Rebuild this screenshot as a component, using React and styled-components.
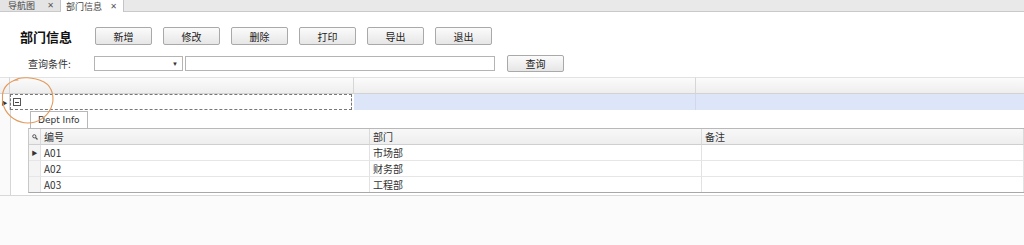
import React from "react";
import styled, { createGlobalStyle } from "styled-components";

const Global = createGlobalStyle`
  html, body { margin: 0; padding: 0; background: #fbfbfb; }
  body {
    width: 1024px;
    height: 245px;
    overflow: hidden;
    font-family: "Liberation Sans", "Noto Sans CJK SC", sans-serif;
    font-size: 10px;
    color: #222;
  }
`;

const Page = styled.div`
  position: relative;
  width: 1024px;
  height: 245px;
  background: #fbfbfb;
`;

const TabStrip = styled.div`
  display: flex;
  height: 11px;
  background: #e9e9e9;
  border-bottom: 1px solid #c9c9c9;
`;

const Tab = styled.div`
  display: flex;
  align-items: center;
  justify-content: space-between;
  box-sizing: border-box;
  width: ${(p) => p.$w}px;
  height: ${(p) => (p.$active ? 12 : 11)}px;
  padding: 0 6px 0 ${(p) => (p.$active ? 5 : 8)}px;
  background: ${(p) => (p.$active ? "#fff" : "#e4e4e4")};
  border-right: 1px solid #c4c4c4;
  font-family: "Noto Sans CJK SC", sans-serif;
  font-size: 9px;
  line-height: 11px;
  color: #444;
`;

const Close = styled.span`
  font-family: "DejaVu Sans", sans-serif;
  font-size: 8px;
  color: #555;
`;

const Body = styled.div`
  background: #fff;
`;

const Toolbar = styled.div`
  display: flex;
  align-items: center;
  height: 18px;
  padding: 15px 0 0 20px;
`;

const Title = styled.div`
  width: 75px;
  font-size: 13px;
  font-weight: bold;
  font-family: "Noto Sans CJK SC", sans-serif;
  color: #111;
`;

const Buttons = styled.div`
  display: flex;
  gap: 11px;
`;

const Button = styled.button`
  box-sizing: border-box;
  width: 57px;
  height: 18px;
  padding: 0;
  border: 1px solid #a9a9a9;
  border-radius: 2px;
  background: linear-gradient(#fbfbfb, #e6e6e6);
  font-family: "Noto Sans CJK SC", sans-serif;
  font-size: 10px;
  color: #222;
`;

const QueryRow = styled.div`
  display: flex;
  align-items: center;
  height: 17px;
  padding: 10px 0 5px 28px;
`;

const Label = styled.div`
  width: 66px;
  font-family: "Noto Sans CJK SC", sans-serif;
  font-size: 10px;
  color: #333;
`;

const Combo = styled.div`
  box-sizing: border-box;
  display: flex;
  justify-content: flex-end;
  align-items: center;
  width: 89px;
  height: 15px;
  padding-right: 4px;
  border: 1px solid #b4b4b4;
  background: #fff;
  font-size: 6px;
  color: #333;
`;

const Input = styled.div`
  box-sizing: border-box;
  width: 310px;
  height: 15px;
  margin-left: 2px;
  border: 1px solid #b4b4b4;
  background: #fff;
`;

const SearchButton = styled(Button)`
  margin-left: 12px;
  height: 17px;
`;

const Grid = styled.div`
  display: grid;
  grid-template-columns: 10px 344px 342px 1fr;
`;

const HeadCell = styled.div`
  height: 15px;
  background: linear-gradient(#fbfbfb, #eeeeee);
  border-bottom: 1px solid #d2d2d2;
  border-right: ${(p) => (p.$last ? "none" : "1px solid #d6d6d6")};
  border-top: 1px solid #e2e2e2;
`;

const Indicator = styled.div`
  display: flex;
  align-items: center;
  justify-content: center;
  height: 16px;
  border-right: 1px solid #d6d6d6;
  font-size: 6px;
  color: #333;
`;

const FocusCell = styled.div`
  box-sizing: border-box;
  display: flex;
  align-items: center;
  height: 16px;
  margin-right: 2px;
  padding-left: 2px;
  border: 1px dashed #777;
  background: #fff;
`;

const SelCell = styled.div`
  height: 16px;
  background: #dde6f9;
  border-right: ${(p) => (p.$last ? "none" : "1px solid #d0d8ea")};
`;

const Expander = styled.div`
  box-sizing: border-box;
  width: 8px;
  height: 8px;
  border: 1px solid #555;
  display: flex;
  align-items: center;
  justify-content: center;
  &::after {
    content: "";
    width: 4px;
    height: 1px;
    background: #444;
  }
`;

const DetailArea = styled.div`
  display: flex;
  background: #fff;
`;

const Gutter = styled.div`
  width: 10px;
  border-right: 1px solid #d6d6d6;
  background: #fafafa;
`;

const Detail = styled.div`
  flex: 1;
  padding: 1px 0 2px 17px;
`;

const DetailTabs = styled.div`
  display: flex;
  padding-left: 2px;
`;

const DetailTab = styled.div`
  box-sizing: border-box;
  height: 17px;
  padding: 0 7px;
  border: 1px solid #b8b8b8;
  border-bottom: none;
  background: #fff;
  font-family: "DejaVu Sans", sans-serif;
  font-size: 9px;
  line-height: 17px;
  color: #333;
`;

const SubGrid = styled.div`
  display: grid;
  grid-template-columns: 12px 329px 332px 1fr;
  border-top: 1px solid #b8b8b8;
  border-bottom: 1px solid #a8a8a8;
  border-left: 1px solid #c8c8c8;
`;

const SubHead = styled.div`
  display: flex;
  align-items: center;
  justify-content: ${(p) => (p.$center ? "center" : "flex-start")};
  height: 15px;
  padding-left: ${(p) => (p.$center ? 0 : 3)}px;
  background: linear-gradient(#f8f8f8, #eeeeee);
  border-bottom: 1px solid #cfcfcf;
  border-right: 1px solid #dadada;
  font-family: "Noto Sans CJK SC", sans-serif;
  font-size: 10px;
  color: #333;
`;

const SubCell = styled.div`
  display: flex;
  align-items: center;
  justify-content: ${(p) => (p.$center ? "center" : "flex-start")};
  height: 15px;
  padding-left: ${(p) => (p.$center ? 0 : 3)}px;
  background: ${(p) => (p.$gutter ? "#f4f4f4" : "#fff")};
  border-bottom: ${(p) => (p.$lastRow ? "none" : "1px solid #e6e6e6")};
  border-right: 1px solid #e2e2e2;
  font-family: "Noto Sans CJK SC", sans-serif;
  font-size: 10px;
  color: #333;
`;

const RowMark = styled.span`
  font-size: 6px;
`;

const Bottom = styled.div`
  height: 52px;
  border-top: 1px solid #d8d8d8;
  background: #fbfbfb;
`;

const Annotation = styled.svg`
  position: absolute;
  left: 0;
  top: 74px;
  pointer-events: none;
`;

const Magnifier = () => (
  <svg width="6" height="6" viewBox="0 0 6 6">
    <circle cx="2.3" cy="2.3" r="1.6" fill="none" stroke="#555" strokeWidth="1" />
    <line x1="3.5" y1="3.5" x2="5.5" y2="5.5" stroke="#555" strokeWidth="1.2" />
  </svg>
);

const rows = [
  { code: "A01", dept: "市场部" },
  { code: "A02", dept: "财务部" },
  { code: "A03", dept: "工程部" },
];

const actions = ["新增", "修改", "删除", "打印", "导出", "退出"];

export default function App() {
  return (
    <Page>
      <Global />
      <TabStrip>
        <Tab $w={61}>
          <span>导航图</span>
          <Close>✕</Close>
        </Tab>
        <Tab $w={63} $active>
          <span>部门信息</span>
          <Close>✕</Close>
        </Tab>
      </TabStrip>
      <Body>
        <Toolbar>
          <Title>部门信息</Title>
          <Buttons>
            {actions.map((a) => (
              <Button key={a}>{a}</Button>
            ))}
          </Buttons>
        </Toolbar>
        <QueryRow>
          <Label>查询条件:</Label>
          <Combo>▼</Combo>
          <Input />
          <SearchButton>查询</SearchButton>
        </QueryRow>
        <Grid>
          <HeadCell />
          <HeadCell />
          <HeadCell />
          <HeadCell $last />
          <Indicator>▶</Indicator>
          <FocusCell>
            <Expander />
          </FocusCell>
          <SelCell />
          <SelCell $last />
        </Grid>
        <DetailArea>
          <Gutter />
          <Detail>
            <DetailTabs>
              <DetailTab>Dept Info</DetailTab>
            </DetailTabs>
            <SubGrid>
              <SubHead $center>
                <Magnifier />
              </SubHead>
              <SubHead>编号</SubHead>
              <SubHead>部门</SubHead>
              <SubHead>备注</SubHead>
              {rows.map((r, i) => {
                const last = i === rows.length - 1;
                return (
                  <React.Fragment key={r.code}>
                    <SubCell $center $gutter $lastRow={last}>
                      {i === 0 ? <RowMark>▶</RowMark> : null}
                    </SubCell>
                    <SubCell $lastRow={last}>{r.code}</SubCell>
                    <SubCell $lastRow={last}>{r.dept}</SubCell>
                    <SubCell $lastRow={last} />
                  </React.Fragment>
                );
              })}
            </SubGrid>
          </Detail>
        </DetailArea>
      </Body>
      <Bottom />
      <Annotation width="70" height="56" viewBox="0 0 70 56">
        <path
          d="M13 7 C20 2 34 3 44 8 C53 13 55 25 51 34 C47 43 38 49 28 49 C18 49 8 43 4 33 C1 25 2 16 7 11 C10 8 14 6 18 6"
          fill="none"
          stroke="#e39a5c"
          strokeWidth="1.1"
          strokeLinecap="round"
        />
      </Annotation>
    </Page>
  );
}
